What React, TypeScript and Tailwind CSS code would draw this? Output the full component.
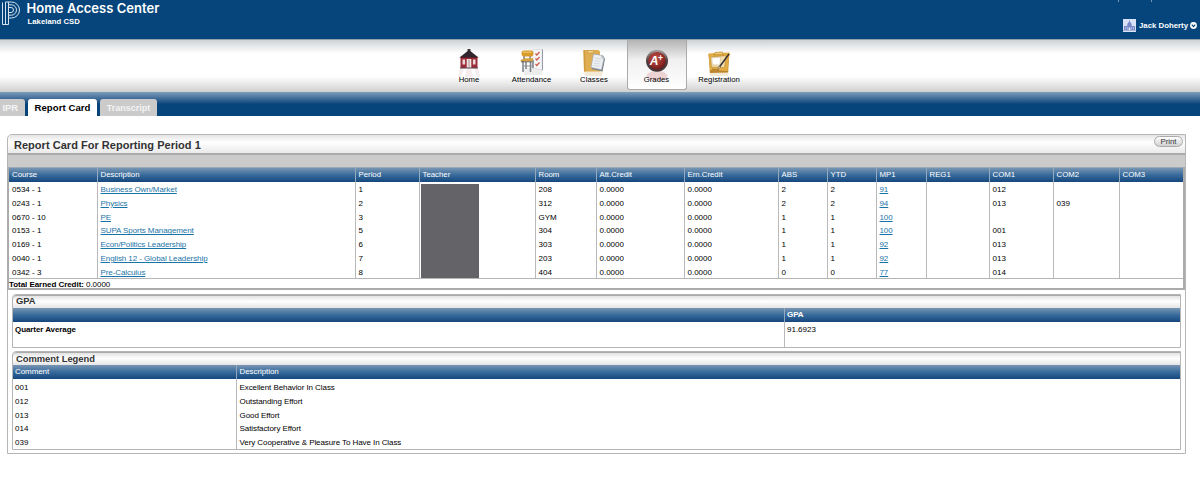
import React from "react";

const COLS =
  "grid grid-cols-[88px_258px_64px_116px_61px_88px_94px_49px_49px_50px_63px_64px_66px_66px]";
const BLUE_HEAD = "bg-linear-to-b from-[#7795b2] via-[#386b9c] to-[#14477d]";
const TITLE_BAR = "bg-linear-to-b from-[#e2e2e2] via-[#ffffff] via-45% to-[#e4e4e4]";

const HEADS = [
  "Course", "Description", "Period", "Teacher", "Room", "Att.Credit", "Ern.Credit",
  "ABS", "YTD", "MP1", "REG1", "COM1", "COM2", "COM3",
];

const ROWS = [
  ["0534 - 1", "Business Own/Market", "1", "", "208", "0.0000", "0.0000", "2", "2", "91", "", "012", "", ""],
  ["0243 - 1", "Physics", "2", "", "312", "0.0000", "0.0000", "2", "2", "94", "", "013", "039", ""],
  ["0670 - 10", "PE", "3", "", "GYM", "0.0000", "0.0000", "1", "1", "100", "", "", "", ""],
  ["0153 - 1", "SUPA Sports Management", "5", "", "304", "0.0000", "0.0000", "1", "1", "100", "", "001", "", ""],
  ["0169 - 1", "Econ/Politics Leadership", "6", "", "303", "0.0000", "0.0000", "1", "1", "92", "", "013", "", ""],
  ["0040 - 1", "English 12 - Global Leadership", "7", "", "203", "0.0000", "0.0000", "1", "1", "92", "", "013", "", ""],
  ["0342 - 3", "Pre-Calculus", "8", "", "404", "0.0000", "0.0000", "0", "0", "77", "", "014", "", ""],
];

const LEGEND = [
  ["001", "Excellent Behavior In Class"],
  ["012", "Outstanding Effort"],
  ["013", "Good Effort"],
  ["014", "Satisfactory Effort"],
  ["039", "Very Cooperative & Pleasure To Have In Class"],
];

function Logo() {
  return (
    <svg width="20" height="26" viewBox="0 0 20 26" fill="none" stroke="#d5e2ee" strokeWidth="1">
      <path d="M2.5 2.5V24.5H8.5V2" />
      <path d="M5.5 2V24.5" />
      <path d="M5.5 2H11.5A8 8 0 0 1 11.5 18H8.5" />
      <path d="M8.5 4.8H11.3A5.2 5.2 0 0 1 11.3 15.2H8.5" />
      <path d="M8.5 7.5H11A2.5 2.5 0 0 1 11 12.5H8.5" />
    </svg>
  );
}

function HomeIcon() {
  return (
    <svg width="30" height="30" viewBox="0 0 30 30">
      <path d="M6 20H24L26 29H4Z" fill="#e6cfd1" opacity=".4" />
      <path d="M10 20H13L11 29H7ZM17 20H20L23 29H19Z" fill="#fff" />
      <rect x="13.5" y="1" width="3" height="4" fill="#453b3e" />
      <path d="M15 2L24.5 9.5H5.5Z" fill="#30262d" />
      <rect x="6.5" y="9" width="17" height="11" fill="#9c2b38" />
      <path d="M6.5 9.5H23.5" stroke="#5e1f2b" />
      <rect x="8.5" y="11.5" width="2.6" height="5" fill="#ead9da" />
      <rect x="18.9" y="11.5" width="2.6" height="5" fill="#ead9da" />
      <rect x="12.7" y="11" width="4.6" height="9" fill="#f1e7e3" />
      <path d="M15 11.5V19.5" stroke="#906c70" strokeWidth=".7" />
      <path d="M6 20H24" stroke="#54424a" />
    </svg>
  );
}

function AttendanceIcon() {
  return (
    <svg width="30" height="30" viewBox="0 0 30 30">
      <path d="M5 20H25V27H7Z" fill="#ccc" opacity=".35" />
      <path d="M15 2L25 1.2V22L15 20Z" fill="#f6f5f7" stroke="#c8c8ce" strokeWidth=".5" />
      <path d="M25.5 1.5V22.5" stroke="#9a9ba8" strokeWidth="1" />
      <path d="M18.5 5.5L19.8 7L22.5 4M18.5 10.5L19.8 12L22.5 9M18.5 16L19.8 17.5L22.5 14.5" fill="none" stroke="#cc5a49" strokeWidth="1.2" />
      <path d="M6 13V24M9 14V21M13.5 14V24M16 12V20M7 7V12M13 7V12" stroke="#7a8087" strokeWidth="1.5" />
      <path d="M6 18H15" stroke="#8b8f94" strokeWidth="1" />
      <rect x="4.5" y="2.5" width="12" height="6" rx="2.8" fill="#d99a2e" />
      <path d="M6 4.2H14.5" stroke="#f1c969" strokeWidth="1.2" />
      <path d="M3.5 12L8 10.3H16.5L15.5 13.5H4Z" fill="#d6a140" />
      <path d="M4 13.8H15.5" stroke="#5d5850" strokeWidth=".9" />
    </svg>
  );
}

function ClassesIcon() {
  return (
    <svg width="30" height="30" viewBox="0 0 30 30">
      <path d="M5 22H24L23 28H6Z" fill="#e8d4b0" opacity=".5" />
      <path d="M4.5 2H19.5L21 3.5V23.5H5Z" fill="#e0ae52" />
      <path d="M4.5 2H6L6.5 23.5H5Z" fill="#cf9a40" />
      <path d="M8 2.5H15L14.5 5H9Z" fill="#f2d28b" stroke="#b98832" strokeWidth=".5" />
      <path d="M15 6L24 7.5L26 11L23.5 23.5L12.5 21Z" fill="#778089" />
      <path d="M14.5 6L22.5 7.3L25 10.5L22.5 21.8L12 19.5Z" fill="#eceef1" stroke="#9da4ac" strokeWidth=".6" />
      <path d="M16 10L22 11M15.6 12.5L21.5 13.5M15 15L21 16M14.6 17.3L20.5 18.5" stroke="#ccd1d6" strokeWidth=".7" />
      <path d="M22.5 7.3L22 10.3L25 10.5Z" fill="#bfc5cb" />
    </svg>
  );
}

function GradesIcon() {
  return (
    <svg width="30" height="34" viewBox="0 0 30 34">
      <defs>
        <radialGradient id="badge" cx=".42" cy=".35" r=".65">
          <stop offset="0" stopColor="#b95047" />
          <stop offset=".65" stopColor="#972e29" />
          <stop offset="1" stopColor="#6b1c1a" />
        </radialGradient>
        <linearGradient id="rim" x1="0" y1="0" x2="0" y2="1">
          <stop offset="0" stopColor="#aaa3a2" />
          <stop offset=".5" stopColor="#4f4141" />
          <stop offset="1" stopColor="#453334" />
        </linearGradient>
      </defs>
      <ellipse cx="15" cy="28" rx="10.5" ry="5" fill="#e6bfbe" opacity=".65" />
      <circle cx="15" cy="12.8" r="11" fill="url(#rim)" />
      <circle cx="15" cy="12.8" r="8.8" fill="url(#badge)" />
      <text x="7.8" y="17" fill="#fff" fontSize="12" fontStyle="italic" fontWeight="700" fontFamily="Liberation Sans, sans-serif">A</text>
      <text x="16" y="12.8" fill="#fff" fontSize="8.5" fontWeight="700" fontFamily="Liberation Sans, sans-serif">+</text>
    </svg>
  );
}

function RegistrationIcon() {
  return (
    <svg width="30" height="30" viewBox="0 0 30 30">
      <path d="M5 22H25L24 28H6Z" fill="#e8d4b0" opacity=".5" />
      <path d="M4.5 6L25.5 5L24 24.5L6 25Z" fill="#bb8530" />
      <path d="M4.5 5.5L25.5 4.5L23.5 23L6 22Z" fill="#e2ac43" />
      <path d="M11 4.5L18.5 4L19.5 6.7H10Z" fill="#f2ce73" stroke="#a77520" strokeWidth=".6" />
      <path d="M6.5 9L22 7.7L20.5 19.5L7.5 19Z" fill="#f3dfb0" stroke="#b78632" strokeWidth=".5" />
      <path d="M7.7 9.8L16.5 9.3L16 17L8.4 16.8Z" fill="#fff" stroke="#cdbd98" strokeWidth=".6" />
      <path d="M25 6L15 19.5" stroke="#363034" strokeWidth="1.5" />
      <path d="M15.5 18L13.5 21.5L16.7 19.3Z" fill="#fff2ce" stroke="#3b3435" strokeWidth=".4" />
      <path d="M8 21L15 22.3" stroke="#8b6422" strokeWidth=".7" />
    </svg>
  );
}

function SchoolIcon() {
  return (
    <svg width="13" height="13" viewBox="0 0 13 13">
      <rect width="13" height="13" fill="#d9e2f6" />
      <path d="M6.5 1.5V3" stroke="#6d7dbd" strokeWidth=".8" />
      <path d="M4.3 5.5A2.2 2.5 0 0 1 8.7 5.5V7H12V11H1V7H4.3Z" fill="#7688c8" />
      <path d="M2.5 8V10.5M4.3 8V10.5M8.7 8V10.5M10.5 8V10.5" stroke="#c7d1ef" strokeWidth=".7" />
      <path d="M5.7 11V8.5H7.3V11Z" fill="#eff2fb" />
      <path d="M0 11.5H13" stroke="#a7b5db" />
    </svg>
  );
}

function NavItem({ label, icon, active }: { label: string; icon: React.ReactNode; active?: boolean }) {
  return (
    <div
      className={
        "flex h-[50px] w-[60px] flex-col items-center " +
        (active
          ? "rounded-b-[3px] border border-t-0 border-[#aaaaaa] bg-linear-to-b from-[#b4b4b4] via-[#f0f0f0] via-40% to-white"
          : "")
      }
    >
      <div className="mt-[8px] h-[26px] w-[30px]">{icon}</div>
      <div className="relative mt-[1px] text-[7.7px] leading-[10px] tracking-[0.06px] whitespace-nowrap text-black">{label}</div>
    </div>
  );
}

export default function App() {
  return (
    <div className="h-[500px] w-[1200px] overflow-hidden bg-white font-['Liberation_Sans',Arial,sans-serif] text-[8px] tracking-[-0.08px] text-black">
      <header className="flex h-[39px] justify-between bg-[#05457b] text-white">
        <div className="flex">
          <Logo />
          <div className="pl-[6.5px]">
            <div className="h-[16px] font-['Inter','Liberation_Sans',sans-serif] text-[13px] leading-[17px] font-semibold tracking-[0.02px] whitespace-nowrap">
              Home Access Center
            </div>
            <div className="pl-[1px] text-[7.7px] leading-[12px] font-bold tracking-[0.06px] whitespace-nowrap">Lakeland CSD</div>
          </div>
        </div>
        <div className="flex flex-col items-end pr-[3px]">
          <div className="mr-[45px] flex h-[19px] gap-[32px]">
            <i className="h-[2px] w-px bg-[#6f95b8]" />
            <i className="h-[2px] w-px bg-[#6f95b8]" />
          </div>
          <div className="flex h-[13px] items-center">
            <SchoolIcon />
            <span className="ml-[3px] text-[7.8px] font-bold tracking-normal whitespace-nowrap">Jack Doherty</span>
            <svg className="ml-[2px]" width="7" height="7" viewBox="0 0 7 7">
              <circle cx="3.5" cy="3.5" r="3.4" fill="#fff" />
              <path d="M1.8 2.7L3.5 4.6L5.2 2.7" fill="none" stroke="#05457b" strokeWidth="1.2" />
            </svg>
          </div>
        </div>
      </header>

      <nav className="flex h-[53px] justify-center gap-[2.5px] border-t border-[#8fa0ae] bg-[linear-gradient(to_bottom,#cfd2d5_0%,#ffffff_26%,#ffffff_70%,#e6e6e6_86%,#cfcfcf_100%)] pr-[12px]">
        <NavItem label="Home" icon={<HomeIcon />} />
        <NavItem label="Attendance" icon={<AttendanceIcon />} />
        <NavItem label="Classes" icon={<ClassesIcon />} />
        <NavItem label="Grades" icon={<GradesIcon />} active />
        <NavItem label="Registration" icon={<RegistrationIcon />} />
      </nav>

      <div className="flex h-[24px] items-end gap-[3px] bg-linear-to-b from-[#7d9dbb] via-[#05457b] via-50% to-[#05457b] text-[9px] leading-[18px] font-bold tracking-normal">
        <div className="h-[17px] w-[25px] rounded-tr-[3px] bg-[#cbcbcb] pl-[2.5px] text-[9.3px] text-[#f4f4f4]">IPR</div>
        <div className="h-[17px] w-[69px] rounded-t-[3px] bg-white text-center text-[9.6px] tracking-[0.06px] whitespace-nowrap">Report Card</div>
        <div className="h-[17px] w-[57px] rounded-t-[3px] bg-[#cbcbcb] text-center text-[#f4f4f4]">Transcript</div>
      </div>

      <main className="mt-[18px] ml-[7px] h-[320px] w-[1179px] rounded-tl-[5px] border border-[#b5b5b5]">
        <div className="flex h-[18px] justify-between rounded-tl-[5px] bg-linear-to-b from-[#e4e4e4] via-white via-40% to-[#e9e9e9]">
          <h1 className="pl-[6px] text-[11px] leading-[21px] font-bold tracking-[0.03px] whitespace-nowrap text-[#333]">
            Report Card For Reporting Period 1
          </h1>
          <button className="mt-px mr-[2px] h-[11px] w-[29px] rounded-full border border-[#aaa] bg-linear-to-b from-white to-[#d0d0d0] text-[7.8px] leading-[9px] tracking-normal text-[#333]">
            Print
          </button>
        </div>
        <div className="h-[14px] border-t-2 border-[#ababab] bg-[#cbcbcb]" />

        <div className="relative -ml-px h-[123px] border-r-2 border-b-2 border-l-2 border-[#ababab]">
          <div className={COLS + " h-[15px] border-t border-[#9aa9b7] text-[7.8px] leading-[14px] tracking-normal text-white " + BLUE_HEAD}>
            {HEADS.map((h, i) => (
              <div key={h} className={i === 0 ? "pl-[3px]" : "border-l border-[#93a9bf] pl-[2.5px]"}>{h}</div>
            ))}
          </div>
          <div className="h-[97px] overflow-hidden border-b border-[#b5b5b5]">
            {ROWS.map((r) => (
              <div key={r[0]} className={COLS + " h-[13.8px] leading-[15px]"}>
                {r.map((c, i) => (
                  <div key={i} className={i === 0 ? "pl-[3px] tracking-[-0.02px]" : "border-l border-[#b9b9b9] pl-[2.5px] whitespace-nowrap"}>
                    {i === 1 || i === 9 ? (
                      <a href="#" className="text-[#1b74a8] underline">{c}</a>
                    ) : (
                      <span className="tracking-normal">{c}</span>
                    )}
                  </div>
                ))}
              </div>
            ))}
          </div>
          <div className="h-[9px] leading-[11px] tracking-[-0.05px]"><b>Total Earned Credit:</b> 0.0000</div>
          <div className="absolute top-[17px] left-[412px] h-[94px] w-[58px] bg-[#646468]" />
        </div>

        <section className="mx-[4px] mt-[4px] h-[54px] rounded-tl-[4px] border border-[#b5b5b5]">
          <h2 className={"h-[13px] rounded-tl-[4px] border-t border-[#aaaaaa] pl-[3px] text-[9.4px] leading-[10px] font-bold text-[#333] " + TITLE_BAR}>GPA</h2>
          <div className={"grid h-[14px] grid-cols-[771px_1fr] leading-[14px] font-bold text-white " + BLUE_HEAD}>
            <div />
            <div className="border-l border-[#93a9bf] pl-[2px]">GPA</div>
          </div>
          <div className="grid h-[25px] grid-cols-[771px_1fr] leading-[15px]">
            <b className="pl-[2px]">Quarter Average</b>
            <div className="border-l border-[#b9b9b9] pl-[2px] tracking-normal">91.6923</div>
          </div>
        </section>

        <section className="mx-[4px] mt-[3px] h-[99px] overflow-hidden rounded-tl-[4px] border border-[#b5b5b5]">
          <h2 className={"h-[13px] rounded-tl-[4px] border-t border-[#aaaaaa] pl-[3px] text-[9.4px] leading-[11px] font-bold tracking-[-0.02px] text-[#333] " + TITLE_BAR}>Comment Legend</h2>
          <div className={"grid h-[14px] grid-cols-[223px_1fr] leading-[14px] text-white " + BLUE_HEAD}>
            <div className="pl-[2px]">Comment</div>
            <div className="border-l border-[#93a9bf] pl-[2.5px]">Description</div>
          </div>
          {LEGEND.map(([code, text]) => (
            <div key={code} className="grid h-[13.8px] grid-cols-[223px_1fr] leading-[17px]">
              <div className="pl-[2px] tracking-normal">{code}</div>
              <div className="border-l border-[#b9b9b9] pl-[2.5px]">{text}</div>
            </div>
          ))}
        </section>
      </main>
    </div>
  );
}
